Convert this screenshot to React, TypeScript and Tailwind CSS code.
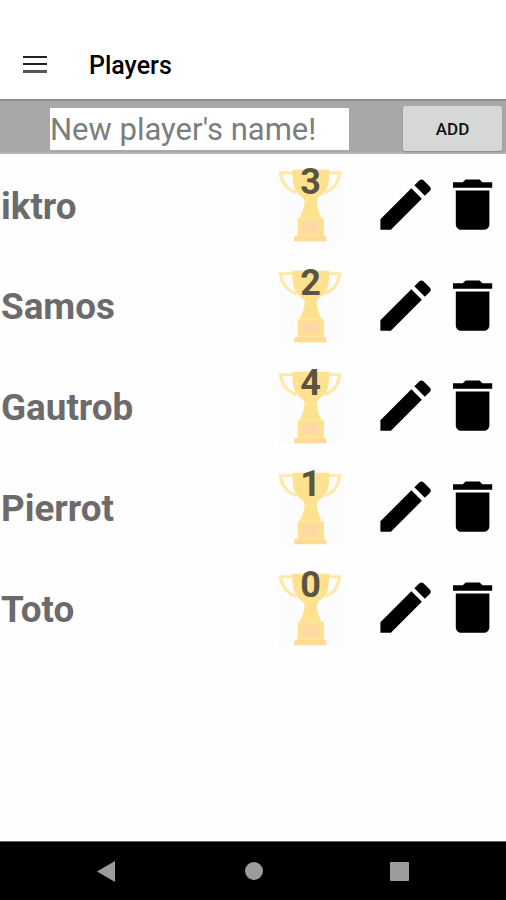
const players = [
  { name: "iktro", wins: 3 },
  { name: "Samos", wins: 2 },
  { name: "Gautrob", wins: 4 },
  { name: "Pierrot", wins: 1 },
  { name: "Toto", wins: 0 },
];

function Trophy() {
  return (
    <svg viewBox="39 36 204 228" className="mt-0.5 h-[76px] w-[68px]" aria-hidden="true">
      <rect x="39" y="40" width="196" height="222" fill="#fcfcfc" />
      <path
        d="M41 49H84V57H53c4 26 16 42 40 50v11C61 106 44 83 41 49zM229 49h-39v8h28c-4 26-15 42-37 50v11c31-12 45-35 48-69z"
        fill="#ffe9a6"
      />
      <path
        d="M82 44h111c0 36-3 58-18 72-8 7-15 9-17 14l1 5-4 3c2 22 8 36 15 52H103c8-18 15-30 16-52l-3-6c-2-6-10-9-17-16-14-16-17-36-17-72z"
        fill="#ffe28f"
      />
      <path d="M98 190h79v52H98z" fill="#ffe08f" />
      <path d="M111 199h51v33h-51z" fill="#fdd8a4" />
      <path d="M91 242h89l4 6v11H87v-11z" fill="#ffdb94" />
    </svg>
  );
}

function PlayerRow({ name, wins }: { name: string; wins: number }) {
  return (
    <li className="flex h-[100.8px] items-center">
      <span className="w-[278px] pt-[5px] pl-px text-[36.8px] leading-none font-bold text-[#6b6b6b]">{name}</span>
      <div className="relative w-[68px]">
        <Trophy />
        <span className="absolute top-[-1.5px] left-0 w-[65px] text-center text-[36px] leading-[36px] font-bold text-[#5a5443]">
          {wins}
        </span>
      </div>
      <div className="ml-auto flex">
        <button aria-label={`Edit ${name}`}>
          <svg viewBox="0 0 24 24" className="size-[67.2px]" fill="#000">
            <path d="M3 17.25V21h3.75L17.81 9.94l-3.75-3.75L3 17.25zM20.71 7.04c.39-.39.39-1.02 0-1.41l-2.34-2.34c-.39-.39-1.02-.39-1.41 0l-1.83 1.83 3.75 3.75 1.83-1.83z" />
          </svg>
        </button>
        <button aria-label={`Delete ${name}`}>
          <svg viewBox="0 0 24 24" className="size-[67.2px]" fill="#000">
            <path d="M6 19c0 1.1.9 2 2 2h8c1.1 0 2-.9 2-2V7H6v12zM19 4h-3.5l-1-1h-5l-1 1H5v2h14V4z" />
          </svg>
        </button>
      </div>
    </li>
  );
}

export default function App() {
  return (
    <div className="flex h-[900px] w-[506px] flex-col overflow-hidden bg-[#fefefe] font-[Roboto,sans-serif]">
      <header className="flex h-[99px] items-end bg-white pb-[19px] pl-[23px]">
        <button aria-label="Menu" className="mb-[7px] flex w-[23.5px] flex-col gap-[5px]">
          <span className="h-[2px] bg-[#222]" />
          <span className="h-[2px] bg-[#222]" />
          <span className="h-[3px] bg-[#555]" />
        </button>
        <h1 className="ml-[42.5px] text-[25px] leading-7 font-medium text-black">Players</h1>
      </header>

      <form className="flex h-[55px] items-center border-t-2 border-b-2 border-t-[#8e8e8e] border-b-[#b4b4b4] bg-[#a8a8a8] pr-1 pl-[50px]">
        <input
          type="text"
          placeholder="New player's name!"
          className="mt-1 h-[42px] w-[299px] bg-white pt-[2px] text-[31px] leading-none text-[#757575] outline-none placeholder:text-[#7b7e7e]"
        />
        <button
          type="button"
          className="mt-[4px] ml-auto h-[45px] w-[99px] rounded-[2px] bg-[#d6d8d7] pt-0.5 text-[17px] font-medium text-[#111] shadow-[0_1px_2px_#888]"
        >
          ADD
        </button>
      </form>

      <ul className="flex-1">
        {players.map((player) => (
          <PlayerRow key={player.name} {...player} />
        ))}
      </ul>

      <nav className="flex h-[59px] items-center border-t border-[#666] bg-black pl-24">
        <svg viewBox="0 0 18 21" className="ml-px h-[21px] w-[18px]" fill="#9c9c9c">
          <path d="M0 10.5 18 0v21z" />
        </svg>
        <span className="ml-[130px] size-[18px] rounded-full bg-[#9c9c9c]" />
        <span className="ml-[127px] size-[19px] rounded-[1px] bg-[#9c9c9c]" />
      </nav>
    </div>
  );
}
